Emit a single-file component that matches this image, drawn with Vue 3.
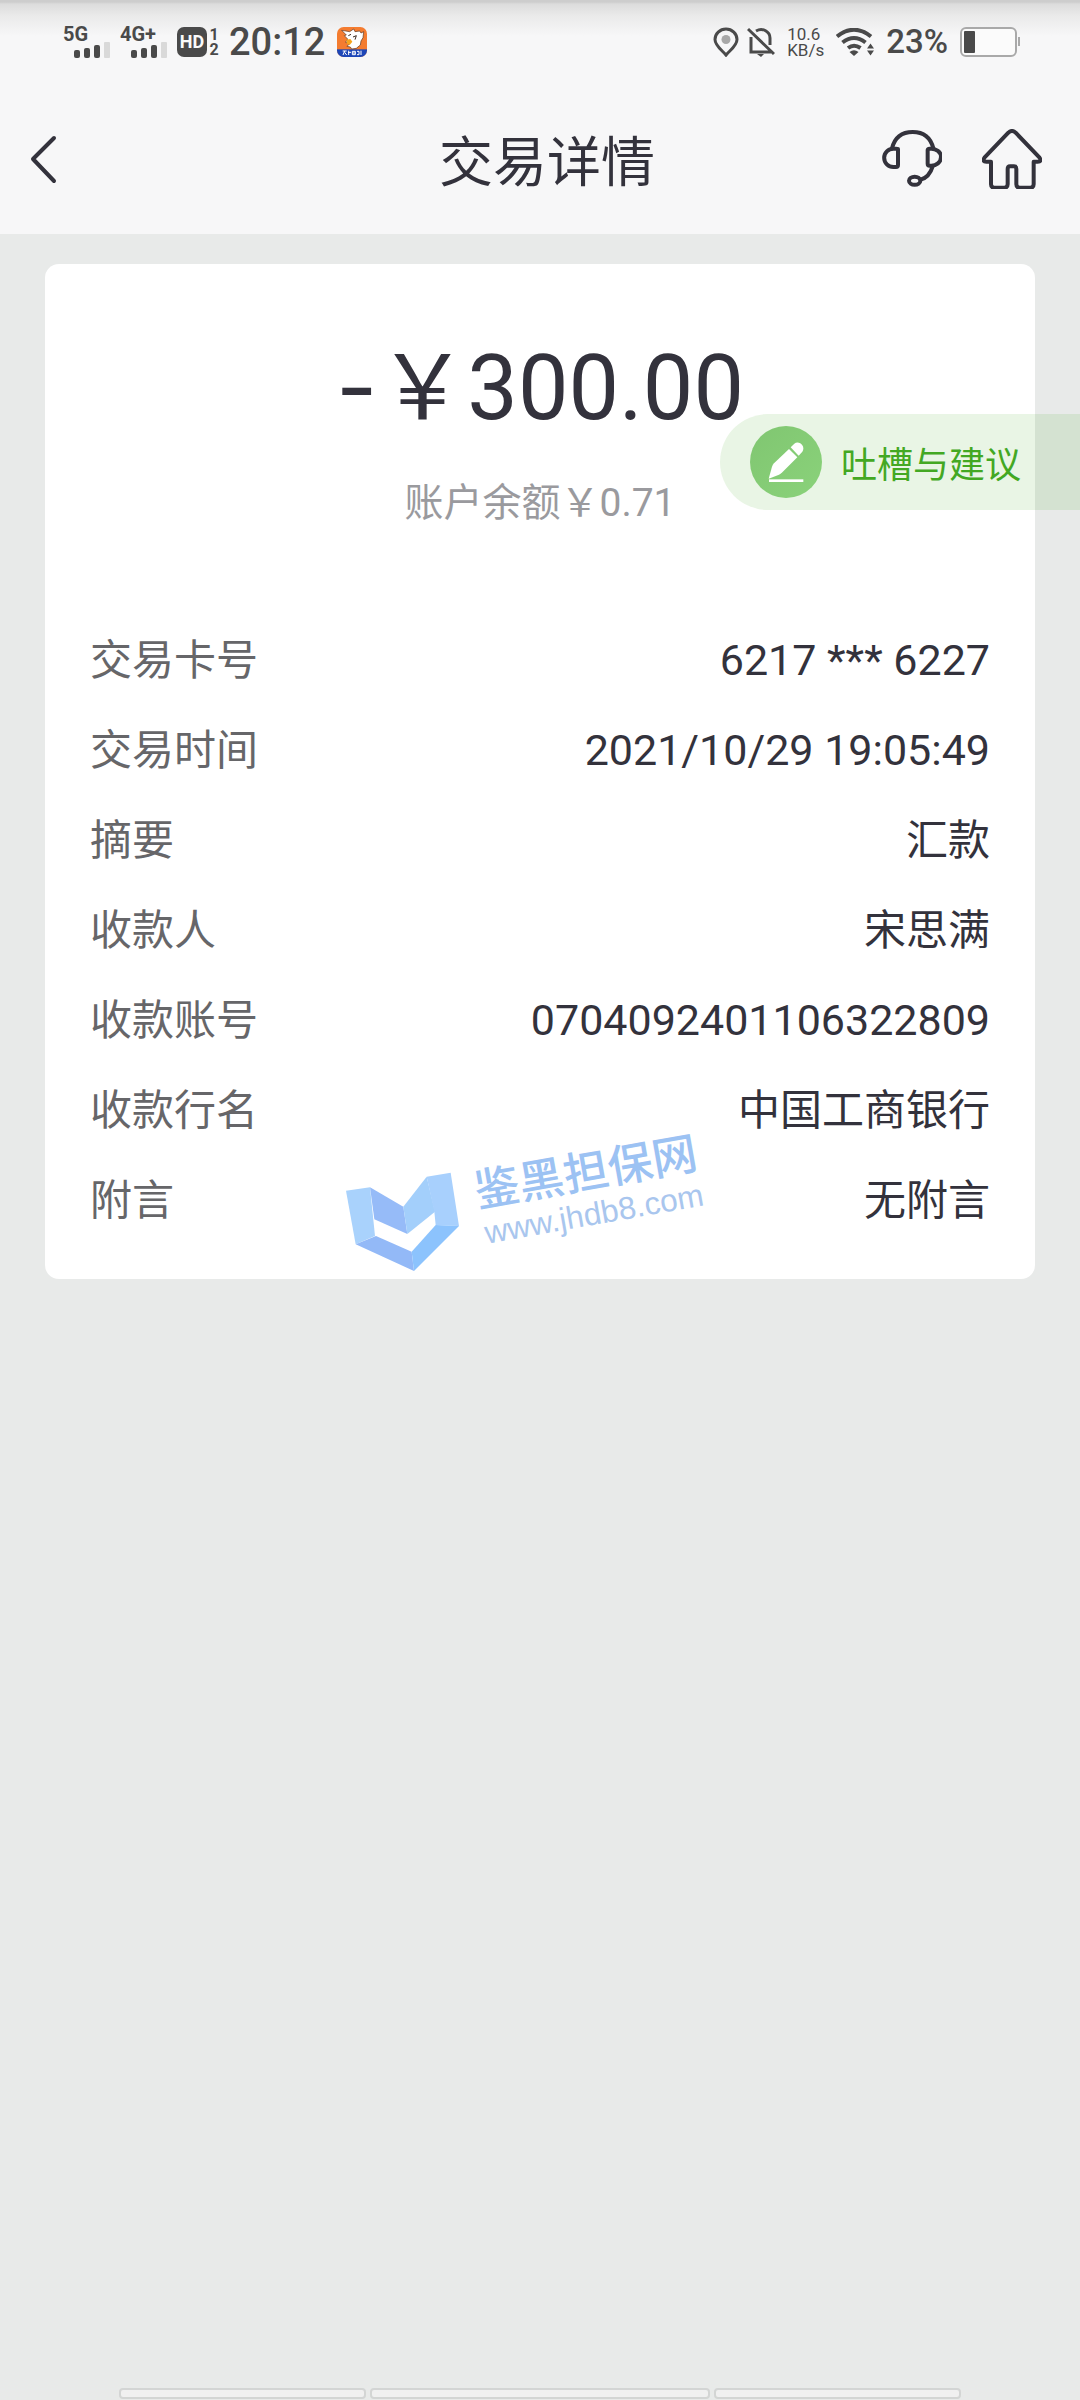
<template>
  <div class="page">
    <header class="top">
      <div class="status-bar">
        <div class="status-group">
          <div class="signal" v-for="net in networks" :key="net">
            <span class="signal-name">{{ net }}</span>
            <svg class="signal-bars" width="36" height="16" viewBox="0 0 36 16">
              <rect x="0" y="8" width="6" height="8" rx="2" fill="#4a4a4a" />
              <rect x="10" y="6" width="6" height="10" rx="2" fill="#4a4a4a" />
              <rect x="20" y="3" width="6" height="13" rx="2" fill="#4a4a4a" />
              <rect x="30" y="0" width="6" height="16" rx="1" fill="#d9d9d9" />
            </svg>
          </div>
          <div class="hd">
            <span class="hd-badge">HD</span>
            <span class="hd-slots"><span>1</span><span>2</span></span>
          </div>
          <span class="clock">20:12</span>
          <svg class="app-icon" width="30" height="30" viewBox="0 0 90 90">
            <defs>
              <clipPath id="appClip"><rect width="90" height="90" rx="20" /></clipPath>
            </defs>
            <g clip-path="url(#appClip)">
              <rect width="90" height="90" fill="#f47c30" />
              <rect y="67" width="90" height="23" fill="#1c46b8" />
              <path d="M14 10l24 4 12-8 4 8 14-2 4 6 8-4-2 18-6 10-2 12-12 10-14 2-4-6-10-2 8-8-12-4 6-10-10-10 6-2z" fill="#fff" stroke="#5a3520" stroke-width="2" />
              <path d="M28 38l12-2 6 8-8 10-8-4z" fill="#f7a51d" />
              <path d="M34 26l8-4M48 30l10-4-4 12" fill="none" stroke="#3a2a20" stroke-width="3" />
              <path d="M17 72h12M23 72l-5 12M23 76l6 8M35 71v13M33 76h9M46 73h9v10h-9zM46 78h9M60 73h6v10h-6M72 71v13" fill="none" stroke="#fff" stroke-width="3" />
            </g>
          </svg>
        </div>
        <div class="status-group right">
          <svg class="location" width="26" height="30" viewBox="0 0 26 30">
            <path d="M13 28C10 24 2 19 2 12.500a11 10.500 0 0 1 22 0C24 19 16 24 13 28z" fill="none" stroke="#4a4a4a" stroke-width="3" />
            <circle cx="13" cy="12.500" r="4.500" fill="#a8a8a8" />
          </svg>
          <svg width="28" height="30" viewBox="0 0 28 30">
            <path d="M1 2l26 25M4 10v15h20M9 4c7-4 14 1 14 7v7" fill="none" stroke="#4a4a4a" stroke-width="3" />
            <path d="M10 27h7l-3 3z" fill="#4a4a4a" />
          </svg>
          <span class="speed"><span>10.6</span><span>KB/s</span></span>
          <svg class="wifi" width="38" height="28" viewBox="0 0 38 28">
            <path d="M1 8.500Q18 -5 35 8.500M6.500 14.500Q18 5.500 29.500 14.500M12 20Q18 15.500 24.500 20" fill="none" stroke="#4a4a4a" stroke-width="4" />
            <path d="M13.500 24q4.500-3.500 9 0L18 28z" fill="#4a4a4a" />
            <path d="M31 20.500l3.500-5 3.500 5zM31 22.500h7l-3.500 5z" fill="#4a4a4a" />
          </svg>
          <span class="percent">23%</span>
          <svg width="60" height="30" viewBox="0 0 60 30">
            <rect x="1" y="1" width="55" height="28" rx="5" fill="#fbfbfb" stroke="#a9a9a9" stroke-width="2" />
            <rect x="4" y="4" width="11" height="22" rx="1" fill="#4a4a4a" />
            <rect x="58" y="10" width="2" height="9" fill="#a9a9a9" />
          </svg>
        </div>
      </div>

      <nav class="nav">
        <button class="icon-btn back-btn" type="button" aria-label="返回" @click="goBack">
          <svg width="30" height="50" viewBox="0 0 30 50">
            <path d="M26 4L5 25l21 22" fill="none" stroke="#33323c" stroke-width="4" stroke-linecap="round" stroke-linejoin="round" />
          </svg>
        </button>
        <h1 class="title">交易详情</h1>
        <button class="icon-btn" type="button" aria-label="客服">
          <svg width="60" height="60" viewBox="0 0 180 180">
            <g fill="none" stroke="#33323c" stroke-width="12" stroke-linejoin="round" stroke-linecap="round">
              <path d="M30 58C38 26 60 9 92 9s54 17 62 49" />
              <path d="M48 60v48q0 6-6 6h-8a27 27 0 0 1 0-55h8q6 0 6 6z" />
              <path d="M137 62v42q0 6 6 6h5c14 0 29-10 29-26s-15-25-29-25h-5q-6 0-6 6z" />
              <path d="M152 112c-6 20-16 34-36 40" />
              <ellipse cx="98" cy="155" rx="17" ry="12" />
            </g>
          </svg>
        </button>
        <button class="icon-btn" type="button" aria-label="首页">
          <svg width="60" height="60" viewBox="0 0 180 180">
            <path d="M79 11q11-10 22 0l71 74q9 13-5 13h-12v68q0 10-10 10h-32q-10 0-10-10v-46q0-8-7-8h-12q-7 0-7 8v46q0 10-10 10H37q-10 0-10-10V98H13q-14 0-5-13z" fill="none" stroke="#33323c" stroke-width="12" stroke-linejoin="round" />
          </svg>
        </button>
      </nav>
    </header>

    <main class="content">
      <section class="card">
        <p class="amount"><span class="sign">-</span>￥300.00</p>
        <p class="balance">账户余额￥0.71</p>
        <dl class="details">
          <div class="row" v-for="item in details" :key="item.label">
            <dt>{{ item.label }}</dt>
            <dd :class="{ number: item.number }">{{ item.value }}</dd>
          </div>
        </dl>

        <svg class="watermark" width="420" height="190" viewBox="0 0 1260 570">
          <polygon points="78,272 150,262 165,408 107,433" fill="#a9d2fc" />
          <polygon points="150,262 250,320 262,402 163,358" fill="#96bbf8" />
          <polygon points="250,320 320,230 345,335 262,402" fill="#a3cffb" />
          <polygon points="320,230 392,218 417,378 347,375 343,335" fill="#a8d0fd" />
          <polygon points="107,433 168,408 275,455 282,513" fill="#93b9f7" />
          <polygon points="275,455 347,375 417,378 282,513" fill="#8cc3fd" />
          <g transform="rotate(-10 480 325)">
            <text class="mark-name" x="474" y="321">鉴黑担保网</text>
          </g>
          <g transform="rotate(-10 500 430)">
            <text class="mark-url" x="500" y="431">www.jhdb8.com</text>
          </g>
        </svg>
      </section>

      <button class="feedback" type="button">
        <svg width="72" height="72" viewBox="0 0 216 216">
          <defs>
            <linearGradient id="penFill" x1="0" y1="0" x2="1" y2="1">
              <stop offset="0" stop-color="#80c671" />
              <stop offset="1" stop-color="#8ad27a" />
            </linearGradient>
          </defs>
          <circle cx="108" cy="108" r="108" fill="url(#penFill)" />
          <path d="M56 158l10-36q2-6 6-10l45-43 25 25-45 45q-4 4-10 7z" fill="#fff" />
          <path d="M122 64l11-11c14-11 35 8 24 24l-11 12z" fill="#fff" />
          <rect x="57" y="160" width="103" height="8" fill="#fff" />
        </svg>
        <span>吐槽与建议</span>
      </button>
    </main>

    <footer class="gesture-bar">
      <span></span>
      <span class="middle"></span>
      <span></span>
    </footer>
  </div>
</template>

<script setup>
import { ref } from 'vue'

const networks = ['5G', '4G+']

const details = ref([
  { label: '交易卡号', value: '6217 *** 6227', number: true },
  { label: '交易时间', value: '2021/10/29 19:05:49', number: true },
  { label: '摘要', value: '汇款' },
  { label: '收款人', value: '宋思满' },
  { label: '收款账号', value: '0704092401106322809', number: true },
  { label: '收款行名', value: '中国工商银行' },
  { label: '附言', value: '无附言' }
])

const goBack = () => {
  window.history.back()
}
</script>

<style>
body {
  margin: 0;
  background: #e8eae9;
}
</style>

<style scoped>
.page {
  display: flex;
  flex-direction: column;
  min-height: 100vh;
  box-sizing: border-box;
  background: #e8eae9;
  color: #33323c;
  font-family: "Noto Sans CJK SC", sans-serif;
}
.top {
  background: linear-gradient(#cdcdcd 0, #cdcdcd 2px, #dcdcdc 4px, #eaeaea 16px, #f7f7f8 36px);
}
.status-bar {
  display: flex;
  justify-content: space-between;
  align-items: center;
  height: 84px;
  padding: 0 60px 0 63px;
  color: #4a4a4a;
  font-family: Roboto, sans-serif;
}
.status-group {
  display: flex;
  align-items: center;
  gap: 10px;
}
.status-group.right {
  gap: 12px;
}
.signal {
  display: flex;
  flex-direction: column;
  width: 47px;
}
.signal-name {
  font-size: 20px;
  line-height: 16px;
  font-weight: 700;
  white-space: nowrap;
}
.signal-bars {
  align-self: flex-end;
}
.hd {
  display: flex;
  gap: 2px;
  font-weight: 700;
}
.hd-badge {
  width: 30px;
  border-radius: 7px;
  background: #4a4a4a;
  color: #fafafa;
  font-size: 18px;
  line-height: 30px;
  text-align: center;
}
.hd-slots {
  display: flex;
  flex-direction: column;
  width: 10px;
  font-size: 16px;
  line-height: 15px;
  text-align: center;
}
.clock {
  font-size: 38px;
  line-height: 40px;
  font-weight: 500;
}
.app-icon {
  margin-left: 2px;
}
.location {
  margin-right: -4px;
}
.speed {
  display: flex;
  flex-direction: column;
  width: 37px;
  font-size: 17px;
  line-height: 16px;
  white-space: nowrap;
}
.percent {
  font-size: 33px;
  line-height: 40px;
  font-weight: 500;
}
.nav {
  display: flex;
  align-items: center;
  height: 150px;
  padding: 0 38px 0 28px;
  gap: 40px;
}
.icon-btn {
  display: flex;
  padding: 0;
  border: none;
  background: none;
  cursor: pointer;
}
.back-btn {
  width: 184px;
}
.title {
  flex: 1;
  margin: 0;
  font-size: 54px;
  line-height: 80px;
  font-weight: 400;
  text-align: center;
}
.content {
  position: relative;
  padding: 30px 45px;
}
.card {
  position: relative;
  padding: 68px 45px 37px;
  border-radius: 14px;
  background: #fff;
}
.amount,
.balance,
.row .number {
  font-family: Roboto, "Noto Sans CJK SC", sans-serif;
}
.amount {
  margin: 0;
  font-size: 90px;
  line-height: 110px;
  text-align: center;
}
.sign {
  font-family: Inter, sans-serif;
}
.balance {
  margin: 31px 0 0;
  color: #9a9a9e;
  font-size: 39px;
  line-height: 56px;
  text-align: center;
}
.details {
  margin: 81px 0 0;
  font-size: 42px;
  line-height: 90px;
}
.row {
  display: flex;
  justify-content: space-between;
  align-items: baseline;
  height: 90px;
}
.row dt {
  color: #666669;
}
.row dd {
  margin: 0;
}
.row .number {
  font-size: 43px;
}
.watermark {
  position: absolute;
  left: 275px;
  bottom: -11px;
  pointer-events: none;
}
.mark-name {
  font-size: 135px;
  font-weight: 500;
  fill: #9cc2f3;
}
.mark-url {
  font-family: "Liberation Sans", sans-serif;
  font-size: 95px;
  fill: #a9c6ee;
}
.feedback {
  position: absolute;
  top: 180px;
  right: 0;
  display: flex;
  align-items: center;
  gap: 19px;
  width: 360px;
  height: 96px;
  padding: 0 0 0 30px;
  border: none;
  border-radius: 48px 0 0 48px;
  background: rgba(60, 170, 30, 0.115);
  color: #43a823;
  font-family: inherit;
  font-size: 36px;
  cursor: pointer;
}
.gesture-bar {
  display: flex;
  gap: 4px;
  margin-top: auto;
  padding: 0 119px 1px;
}
.gesture-bar span {
  flex: 246;
  height: 11px;
  box-sizing: border-box;
  border: 2px solid #d3d5d4;
  border-radius: 4px;
  background: #f0f0f0;
}
.gesture-bar .middle {
  flex: 340;
}
</style>
